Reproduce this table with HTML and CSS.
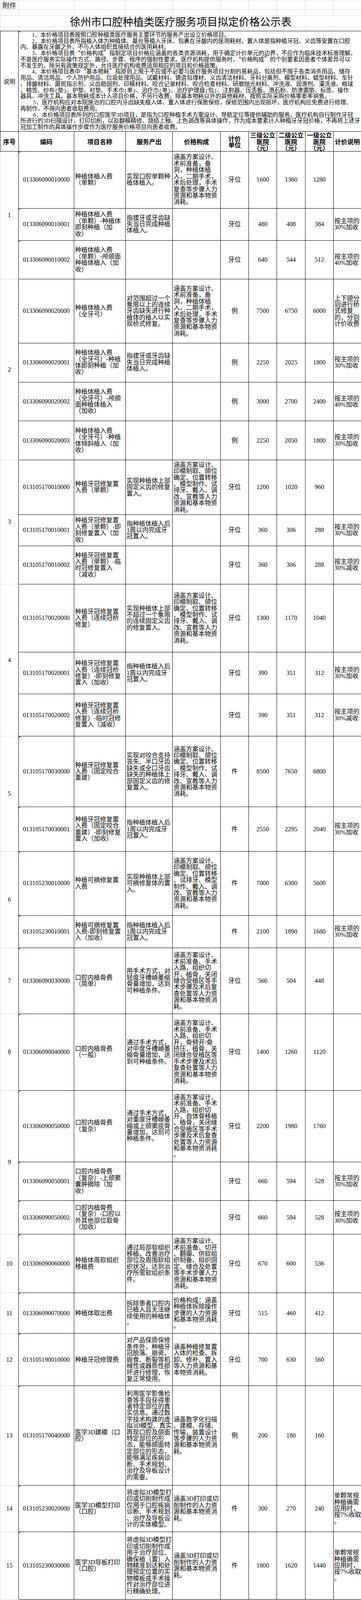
FILE: index.html
```html
<!DOCTYPE html>
<html lang="zh-CN">
<head>
<meta charset="utf-8">
<title>徐州市口腔种植类医疗服务项目拟定价格公示表</title>
<link rel="stylesheet" href="styles.css">
</head>
<body>
<table class="sheet">
<colgroup>
<col class="c1"><col class="c2"><col class="c3"><col class="c4"><col class="c5"><col class="c6"><col class="c7"><col class="c8"><col class="c9"><col class="c10">
</colgroup>
<tbody>
<tr class="g t1"><td class="att">附件</td><td></td><td></td><td></td><td></td><td></td><td></td><td></td><td></td><td></td></tr>
<tr class="g t2"><td></td><td></td><td></td><td></td><td></td><td></td><td></td><td></td><td></td><td></td></tr>
<tr class="g t3"><td class="title" colspan="10">徐州市口腔种植类医疗服务项目拟定价格公示表</td></tr>
<tr class="g t4 last"><td></td><td></td><td></td><td></td><td></td><td></td><td></td><td></td><td></td><td></td></tr>
<tr class="t5"><td class="lbl">说明</td><td class="notes tri" colspan="9">　　1．本价格项目表按照口腔种植类医疗服务主要环节的服务产出设立价格项目。<br>　　2．本价格项目表所指植入体为种植体、基台等植入牙床、包裹在牙龈内的医用耗材，置入体是指种植牙冠、义齿等安置在口腔<br>内、暴露在牙龈之外，不与人体组织直接结合的医用耗材。<br>　　3．本价格项目表<span class="q">“</span>价格构成<span class="q">”</span>指制定项目价格应涵盖的各类资源消耗，用于确定计价单元的边界，不应作为临床技术标准理解，<br>不是医疗服务实际操作方式、路径、步骤、程序的强制性要求。医疗机构提供服务时，<span class="q">“</span>价格构成<span class="q">”</span>的个别要素因患者个体差异可以<br>不发生的，除另有政策规定外，允许医疗机构收费适用相应的项目和价格政策。<br>　　4．本价格项目表中<span class="q">“</span>基本物耗<span class="q">”</span>指原则上限于不应或不必要与医疗服务项目分割的易耗品，包括但不限于各类消杀用品、储存<br>用品、清洁用品、个人防护用品、垃圾处理用品、试戴材料、铸造包埋材、义齿清洁材料、牙科分离剂、模型材料、蜡型材料、车针<br>、排龈材料、菌斑指示剂、义齿稳固剂、印模材料、咬合记录材料、咬合检查材料、研磨抛光材料、冲洗液、润滑剂、灌洗液、棉球<br>、棉签、纱布<span class="p">(</span>垫<span class="p">)</span>、护垫、衬垫、手术巾<span class="p">(</span>单<span class="p">)</span>、治疗巾<span class="p">(</span>单<span class="p">)</span>、治疗护理盘<span class="p">(</span>包<span class="p">)</span>、注射器、压舌板、滑石粉、防渗漏垫、标签、操作<br>器具、冲洗工具。基本物耗成本计入项目价格，不另行收费。除基本物耗以外的其他耗材，按照实际采购价格零差率销售。<br>　　 5．医疗机构应对本院施治的口腔内牙齿缺失植入体、置入体进行保质保修，保修范围内出现损坏，医疗机构应免费进行修理、<br>再制作，不得向患者收取费用。<br>　　 6．本价格项目表所列的口腔医学3D项目，是指为口腔种植手术方案设计、导航定位等提供辅助的服务。医疗机构自行制作牙冠<br>所进行的3D扫描设计、打印切削，以及翻模精修、烧结上釉、上色调改等具体操作，作为成本要素计入种植牙牙冠价格，不再将上述牙<br>冠加工制作的具体操作步骤作为医疗服务价格项目向患者收费。</td></tr>
<tr class="hdrow"><td class="hd">序号</td><td class="hd">编码</td><td class="hd">项目名称</td><td class="hd">服务产出</td><td class="hd">价格构成</td><td class="hd">计价<br>单位</td><td class="hd">三级公立<br>医院<br>（元）</td><td class="hd">二级公立<br>医院<br>（元）</td><td class="hd">一级公立<br>医院<br>（元）</td><td class="hd">计价说明</td></tr>

<tr class="b1"><td class="sn" rowspan="3">1</td><td class="cd tri">013306090010000</td><td class="tx">种植体植入费<br>（单颗）</td><td class="tx">实现口腔单颗种<br>植体植入。</td><td class="tx">涵盖方案设计、<br>术前准备，备<br>洞，种植体植<br>入，二期手术，<br>术后处理，手术<br>复查等步骤人力<br>资源和基本物资<br>消耗。</td><td class="ct">牙位</td><td class="ct">1600</td><td class="ct">1360</td><td class="ct">1280</td><td class="tx"></td></tr>
<tr class="b2"><td class="cd tri">013306090010001</td><td class="tx">种植体植入费<br>（单颗）-种植体<br>即刻种植（加<br>收）</td><td class="tx">指拔牙或牙齿缺<br>失当日完成种植<br>体植入。</td><td class="tx"></td><td class="ct">牙位</td><td class="ct">480</td><td class="ct">408</td><td class="ct">384</td><td class="tx">按主项的<br>30%加收</td></tr>
<tr class="b3"><td class="cd tri">013306090010002</td><td class="tx">种植体植入费<br>（单颗）-颅颌面<br>种植体植入（加<br>收）</td><td class="tx"></td><td class="tx"></td><td class="ct">牙位</td><td class="ct">640</td><td class="ct">544</td><td class="ct">512</td><td class="tx">按主项的<br>40%加收</td></tr>

<tr class="b4"><td class="sn" rowspan="4">2</td><td class="cd">013306090020000</td><td class="tx">种植体植入费<br>（全牙弓）</td><td class="tx">对范围超过一个<br>象限以上的连续<br>牙齿缺失进行种<br>植体的植入以实<br>现桥式修复。</td><td class="tx">涵盖方案设计、<br>术前准备，备<br>洞，种植体植<br>入，二期手术，<br>术后处理，手术<br>复查等步骤人力<br>资源和基本物资<br>消耗。</td><td class="ct">例</td><td class="ct">7500</td><td class="ct">6750</td><td class="ct">6000</td><td class="tx">上下颌分<br>别进行桥<br>式修复<br>的，分别<br>计价收费</td></tr>
<tr class="b5"><td class="cd">013306090020001</td><td class="tx">种植体植入费<br>（全牙弓）-种植<br>体即刻种植（加<br>收）</td><td class="tx">指拔牙或牙齿缺<br>失当日完成种植<br>体植入。</td><td class="tx"></td><td class="ct">例</td><td class="ct">2250</td><td class="ct">2025</td><td class="ct">1800</td><td class="tx">按主项的<br>30%加收</td></tr>
<tr class="b6"><td class="cd">013306090020002</td><td class="tx">种植体植入费<br>（全牙弓）-颅颌<br>面种植体植入<br>（加收）</td><td class="tx"></td><td class="tx"></td><td class="ct">例</td><td class="ct">3000</td><td class="ct">2700</td><td class="ct">2400</td><td class="tx">按主项的<br>40%加收</td></tr>
<tr class="b7"><td class="cd">013306090020003</td><td class="tx">种植体植入费<br>（全牙弓）-种植<br>体倾斜植入（加<br>收）</td><td class="tx"></td><td class="tx"></td><td class="ct">例</td><td class="ct">2250</td><td class="ct">2050</td><td class="ct">1800</td><td class="tx">按主项的<br>30%加收</td></tr>

<tr class="b8"><td class="sn" rowspan="3">3</td><td class="cd">013105170010000</td><td class="tx">种植牙冠修复置<br>入费（单颗）</td><td class="tx">实现种植体上部<br>固定义齿的修复<br>置入。</td><td class="tx">涵盖方案设计、<br>印模制取、颌位<br>确定、位置转移<br>、模型制作、试<br>排牙、戴入、调<br>改、宣教等人力<br>资源和基本物资<br>消耗。</td><td class="ct">牙位</td><td class="ct">1200</td><td class="ct">1020</td><td class="ct">960</td><td class="tx"></td></tr>
<tr class="b9"><td class="cd">013105170010001</td><td class="tx">种植牙冠修复置<br>入费（单颗）-即<br>刻修复置入（加<br>收）</td><td class="tx">指种植体植入后<br>1周以内完成牙<br>冠置入。</td><td class="tx"></td><td class="ct">牙位</td><td class="ct">360</td><td class="ct">306</td><td class="ct">288</td><td class="tx">按主项的<br>30%加收</td></tr>
<tr class="b10"><td class="cd">013105170010002</td><td class="tx">种植牙冠修复置<br>入费（单颗）-临<br>时冠修复置入<br>（减收）</td><td class="tx"></td><td class="tx"></td><td class="ct">牙位</td><td class="ct">360</td><td class="ct">306</td><td class="ct">288</td><td class="tx">按主项的<br>30%减收</td></tr>

<tr class="b11"><td class="sn" rowspan="3">4</td><td class="cd">013105170020000</td><td class="tx">种植牙冠修复置<br>入费（连续冠桥<br>修复）</td><td class="tx">实现种植体上部<br>不超过一个象限<br>的连续固定义齿<br>的修复置入。</td><td class="tx">涵盖方案设计、<br>印模制取、颌位<br>确定、位置转移<br>、模型制作、试<br>排牙、戴入、调<br>改、宣教等人力<br>资源和基本物资<br>消耗。</td><td class="ct">牙位</td><td class="ct">1300</td><td class="ct">1170</td><td class="ct">1040</td><td class="tx"></td></tr>
<tr class="b12"><td class="cd">013105170020001</td><td class="tx">种植牙冠修复置<br>入费（连续冠桥<br>修复）-即刻修复<br>置入（加收）</td><td class="tx">指种植体植入后<br>1周以内完成牙<br>冠置入。</td><td class="tx"></td><td class="ct">牙位</td><td class="ct">390</td><td class="ct">351</td><td class="ct">312</td><td class="tx">按主项的<br>30%加收</td></tr>
<tr class="b13"><td class="cd">013105170020002</td><td class="tx">种植牙冠修复置<br>入费（连续冠桥<br>修复）-临时冠修<br>复置入（减收）</td><td class="tx"></td><td class="tx"></td><td class="ct">牙位</td><td class="ct">390</td><td class="ct">351</td><td class="ct">312</td><td class="tx">按主项的<br>30%减收</td></tr>

<tr class="b14"><td class="sn" rowspan="2">5</td><td class="cd tri">013105170030000</td><td class="tx">种植牙冠修复置<br>入费（固定咬合<br>重建）</td><td class="tx">实现对咬合支持<br>丧失、半口牙齿<br>缺失或全口牙齿<br>缺失的种植体上<br>部固定义齿的修<br>复置入。</td><td class="tx">涵盖方案设计、<br>印模制取、颌位<br>确定、位置转移<br>、模型制作、试<br>排牙、戴入、调<br>改、宣教等人力<br>资源和基本物资<br>消耗。</td><td class="ct">件</td><td class="ct">8500</td><td class="ct">7650</td><td class="ct">6800</td><td class="tx"></td></tr>
<tr class="b15"><td class="cd tri">013105170030001</td><td class="tx">种植牙冠修复置<br>入费（固定咬合<br>重建）-即刻修复<br>置入（加收）</td><td class="tx">指种植体植入后<br>1周以内完成牙<br>冠置入。</td><td class="tx"></td><td class="ct">件</td><td class="ct">2550</td><td class="ct">2295</td><td class="ct">2040</td><td class="tx">按主项的<br>30%加收</td></tr>

<tr class="b16"><td class="sn" rowspan="2">6</td><td class="cd tri">013105230010000</td><td class="tx">种植可摘修复置<br>入费</td><td class="tx">实现种植体上部<br>可摘修复体的置<br>入。</td><td class="tx">涵盖方案设计、<br>印模制取、颌位<br>确定、位置转移<br>、试排牙、模型<br>制作、戴入、调<br>改、宣教等人力<br>资源和基本物资<br>消耗。</td><td class="ct">件</td><td class="ct">7000</td><td class="ct">6300</td><td class="ct">5600</td><td class="tx"></td></tr>
<tr class="b17"><td class="cd tri">013105230010001</td><td class="tx">种植可摘修复置<br>入费-即刻修复置<br>入（加收）</td><td class="tx">指种植体植入后<br>1周以内完成牙<br>冠置入。</td><td class="tx"></td><td class="ct">件</td><td class="ct">2100</td><td class="ct">1890</td><td class="ct">1680</td><td class="tx">按主项的<br>30%加收</td></tr>

<tr class="b18"><td class="sn">7</td><td class="cd tri">013306090030000</td><td class="tx">口腔内植骨费<br>（简单）</td><td class="tx">用手术方式，对<br>轻度牙槽嵴萎缩<br>骨量增加，达到<br>可种植条件。</td><td class="tx">涵盖方案设计、<br>术前准备、手术<br>入路，组织切<br>开，植骨，关闭<br>缝合受植区等手<br>术步骤及术后复<br>查处置等人力资<br>源和基本物资消<br>耗。</td><td class="ct">牙位</td><td class="ct">560</td><td class="ct">504</td><td class="ct">448</td><td class="tx"></td></tr>

<tr class="b19"><td class="sn">8</td><td class="cd tri">013306090040000</td><td class="tx">口腔内植骨费<br>（一般）</td><td class="tx">通过手术方式，<br>对中度牙槽嵴萎<br>缩骨量增加，达<br>到可种植条件。</td><td class="tx">涵盖方案设计、<br>术前准备、手术<br>入路，组织切<br>开，骨劈开/骨<br>挤压，植骨，关<br>闭缝合受植区等<br>手术步骤及术后<br>复查处置等人力<br>资源和基本物资<br>消耗。</td><td class="ct">牙位</td><td class="ct">1400</td><td class="ct">1260</td><td class="ct">1120</td><td class="tx"></td></tr>

<tr class="b20"><td class="sn" rowspan="3">9</td><td class="cd tri">013306090050000</td><td class="tx">口腔内植骨费<br>（复杂）</td><td class="tx">通过手术方式，<br>对重度牙槽嵴萎<br>缩或上颌窦底骨<br>量增加，达到可<br>种植条件。</td><td class="tx">涵盖方案设计、<br>术前准备、手术<br>入路，组织切<br>开，自体骨移植<br>、植骨，关闭缝<br>合受植区等手术<br>步骤及术后复查<br>处置等人力资源<br>和基本物资消耗<br>。</td><td class="ct">牙位</td><td class="ct">2200</td><td class="ct">1980</td><td class="ct">1760</td><td class="tx"></td></tr>
<tr class="b21"><td class="cd tri">013306090050001</td><td class="tx">口腔内植骨费<br>（复杂）-上颌窦<br>囊肿摘除（加<br>收）</td><td class="tx"></td><td class="tx"></td><td class="ct">牙位</td><td class="ct">660</td><td class="ct">594</td><td class="ct">528</td><td class="tx">按主项的<br>30%加收</td></tr>
<tr class="b22"><td class="cd tri">013306090050002</td><td class="tx">口腔内植骨费<br>（复杂）-口腔以<br>外其他部位取骨<br>（加收）</td><td class="tx"></td><td class="tx"></td><td class="ct">牙位</td><td class="ct">660</td><td class="ct">594</td><td class="ct">528</td><td class="tx">按主项的<br>30%加收</td></tr>

<tr class="b23"><td class="sn">10</td><td class="cd tri">013306090060000</td><td class="tx">种植体周软组织<br>移植费</td><td class="tx">通过局部软组织<br>移植，改善治疗<br>部位及周围软组<br>织状况，达到治<br>疗所需软组织条<br>件。</td><td class="tx">涵盖方案设计、<br>术前准备、切开<br>、翻瓣、供软组<br>织制备、组织固<br>定、缝合及处置<br>等手术步骤人力<br>资源和基本物资<br>消耗。</td><td class="ct">牙位</td><td class="ct">670</td><td class="ct">600</td><td class="ct">536</td><td class="tx"></td></tr>

<tr class="b24"><td class="sn">11</td><td class="cd tri">013306090070000</td><td class="tx">种植体取出费</td><td class="tx">拆除患者口腔内<br>已植入且无法继<br>续使用的种植体<br>。</td><td class="tx">价格构成：涵盖<br>种植体拆除操作<br>步骤的人力资源<br>和基本物资消耗<br>。</td><td class="ct">牙位</td><td class="ct">515</td><td class="ct">460</td><td class="ct">412</td><td class="tx"></td></tr>

<tr class="b25"><td class="sn">12</td><td class="cd tri">013105190010000</td><td class="tx">种植牙冠修理费</td><td class="tx">对产品保质保修<br>条件外，种植牙<br>冠脱落、崩瓷、<br>嵌食、断裂等机<br>械性或器质性损<br>坏进行修理，恢<br>复正常使用。</td><td class="tx">涵盖种植修复置<br>入体的检查、拆<br>卸、修补、置入<br>等人力资源和基<br>本物资消耗。</td><td class="ct">牙位</td><td class="ct">700</td><td class="ct">630</td><td class="ct">560</td><td class="tx"></td></tr>

<tr class="b26"><td class="sn">13</td><td class="cd tri">013105170040000</td><td class="tx">医学3D建模（口<br>腔）</td><td class="tx">利用医学影像检<br>查等手段获得患<br>者特定部位的真<br>实信息。通过数<br>字技术构建的虚<br>拟3D模型、真实<br>再现口腔及颌面<br>特定部位的形<br>态，能够颌面特<br>定部位的形态，<br>能够满足疾病诊<br>断、手术规划、<br>治疗及导板设计<br>的需要。</td><td class="tx">涵盖数字化扫描<br>、建模、存储、<br>传输，装置设计<br>等步骤的人力资<br>源和基本物资消<br>耗。</td><td class="ct">例</td><td class="ct">200</td><td class="ct">180</td><td class="ct">160</td><td class="tx"></td></tr>

<tr class="b27"><td class="sn">14</td><td class="cd tri">013105230020000</td><td class="tx">医学3D模型打印<br>（口腔）</td><td class="tx">将虚拟3D模型打<br>印或切削制作成<br>仅用于口腔疾病<br>诊断、手术规划<br>、治疗及导板设<br>计的实体模型。</td><td class="tx">涵盖3D打印或切<br>削制作的人力资<br>源和基本物资消<br>耗。</td><td class="ct">件</td><td class="ct">300</td><td class="ct">270</td><td class="ct">240</td><td class="tx nt">单颗常规<br>种植确需<br>应用时，<br>按7%收取<br>。</td></tr>

<tr class="b28"><td class="sn">15</td><td class="cd tri">013105230030000</td><td class="tx">医学3D导板打印<br>（口腔）</td><td class="tx">将虚拟3D模型打<br>印或切削制作成<br>用于治疗部位、<br>确保植（置）入<br>物精准到达和处<br>理预定位置的实<br>物模板或手术操<br>作对治疗部位进<br>行精确处理。</td><td class="tx">涵盖3D打印或切<br>削制作的人力资<br>源和基本物资消<br>耗。</td><td class="ct">件</td><td class="ct">1800</td><td class="ct">1620</td><td class="ct">1440</td><td class="tx nt">单颗常规<br>种植确需<br>应用时，<br>按7%收取<br>。</td></tr>
</tbody>
</table>
</body>
</html>
```

FILE: styles.css
```css
html, body {
  margin: 0;
  padding: 0;
  background: #ffffff;
}

body {
  width: 924px;
  color: #000000;
  font-family: "Liberation Serif", "Noto Sans CJK SC", serif;
}

.sheet {
  border-collapse: collapse;
  table-layout: fixed;
  width: 924px;
}

.c1 { width: 47px; }
.c2 { width: 142px; }
.c3 { width: 132px; }
.c4 { width: 120px; }
.c5 { width: 123px; }
.c6 { width: 72px; }
.c7 { width: 72px; }
.c8 { width: 73px; }
.c9 { width: 72px; }
.c10 { width: 71px; }

.sheet td {
  border: 1px solid #000000;
  padding: 0 1px 0 2px;
  font-size: 16px;
  line-height: 16.4px;
  vertical-align: middle;
  white-space: nowrap;
  overflow: visible;
  text-align: left;
}

/* spreadsheet gridline area above the table */
.sheet .g td {
  border: 1px solid #d0d7e5;
}
.sheet .g.last td {
  border-bottom: 1px solid #000000;
}

.t1 { height: 23.6px; }
.t2 { height: 16.6px; }
.t3 { height: 27.6px; }
.t4 { height: 10.9px; }
.t5 { height: 257.5px; }
.hdrow { height: 50.5px; }

.sheet td.att {
  font-family: "Noto Sans CJK SC", sans-serif;
  font-size: 18px;
  line-height: 21px;
  vertical-align: bottom;
  padding-left: 5px;
  color: #111111;
}

.sheet td.title {
  font-family: "Noto Sans CJK SC", sans-serif;
  font-size: 27px;
  line-height: 25px;
  text-align: center;
  padding: 0;
}

.sheet td.lbl {
  text-align: center;
  padding: 0;
  font-family: "Noto Sans CJK SC", sans-serif;
  font-size: 15px;
}

.sheet td.notes {
  font-size: 14.7px;
  line-height: 15.75px;
  padding: 2px 2px 2px 4px;
  vertical-align: middle;
}

.q {
  font-family: "Noto Sans CJK SC", sans-serif;
  line-height: 0;
}

.p {
  font-family: "Liberation Mono", monospace;
  font-size: 13px;
  line-height: 0;
}

.sheet td.hd {
  font-weight: bold;
  text-align: center;
  padding: 0;
  font-family: "Noto Sans CJK SC", sans-serif;
}

.sheet td.sn {
  text-align: center;
  padding: 0;
  border-top-color: #d0d7e5;
  border-bottom-color: #d0d7e5;
  border-left-color: #d0d7e5;
  border-right-color: #000000;
}

.sheet td.cd {
  text-align: center;
  padding: 0;
}

.sheet td.ct {
  text-align: center;
  padding: 0;
}

.sheet td.nt {
  padding-left: 1px;
  padding-right: 0;
}

.tri {
  position: relative;
}
.tri::before {
  content: "";
  position: absolute;
  left: 0;
  top: 0;
  width: 0;
  height: 0;
  border-top: 4px solid #1f9a1f;
  border-right: 5px solid transparent;
}

.b1 { height: 145.9px; }
.b2 { height: 82.3px; }
.b3 { height: 99.6px; }
.b4 { height: 163.2px; }
.b5 { height: 99.9px; }
.b6 { height: 99.9px; }
.b7 { height: 99.9px; }
.b8 { height: 139.3px; }
.b9 { height: 80.3px; }
.b10 { height: 98.1px; }
.b11 { height: 173.7px; }
.b12 { height: 107.7px; }
.b13 { height: 107.7px; }
.b14 { height: 181.3px; }
.b15 { height: 113.9px; }
.b16 { height: 163.8px; }
.b17 { height: 83.2px; }
.b18 { height: 169.1px; }
.b19 { height: 195.3px; }
.b20 { height: 183.4px; }
.b21 { height: 99.3px; }
.b22 { height: 86.1px; }
.b23 { height: 149.8px; }
.b24 { height: 104.2px; }
.b25 { height: 134px; }
.b26 { height: 254.4px; }
.b27 { height: 119.7px; }
.b28 { height: 172.3px; }
```
